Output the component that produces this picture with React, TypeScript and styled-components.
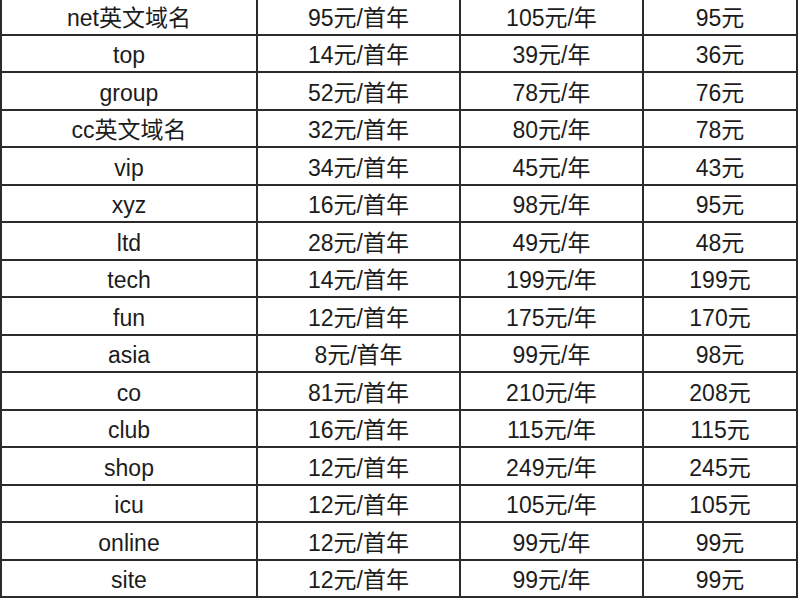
import React from 'react';
import styled, { createGlobalStyle } from 'styled-components';

const ROWS: [string, string, string, string][] = [
  ['net英文域名', '95元/首年', '105元/年', '95元'],
  ['top', '14元/首年', '39元/年', '36元'],
  ['group', '52元/首年', '78元/年', '76元'],
  ['cc英文域名', '32元/首年', '80元/年', '78元'],
  ['vip', '34元/首年', '45元/年', '43元'],
  ['xyz', '16元/首年', '98元/年', '95元'],
  ['ltd', '28元/首年', '49元/年', '48元'],
  ['tech', '14元/首年', '199元/年', '199元'],
  ['fun', '12元/首年', '175元/年', '170元'],
  ['asia', '8元/首年', '99元/年', '98元'],
  ['co', '81元/首年', '210元/年', '208元'],
  ['club', '16元/首年', '115元/年', '115元'],
  ['shop', '12元/首年', '249元/年', '245元'],
  ['icu', '12元/首年', '105元/年', '105元'],
  ['online', '12元/首年', '99元/年', '99元'],
  ['site', '12元/首年', '99元/年', '99元'],
];

const GlobalStyle = createGlobalStyle`
  html, body {
    margin: 0;
    padding: 0;
    background: #ffffff;
  }
  body {
    font-family: "Liberation Sans", "Noto Sans CJK SC", sans-serif;
    color: #1c1c1c;
  }
`;

const Page = styled.div`
  width: 800px;
  height: 600px;
  overflow: hidden;
  background: #ffffff;
`;

const Table = styled.div`
  margin-top: -2px;
  width: 798px;
  border-left: 2px solid #2b2b2b;
  border-right: 2px solid #2b2b2b;
  box-sizing: border-box;
`;

const Row = styled.div`
  display: grid;
  grid-template-columns: 256px 203px 183px 1fr;
  height: 37.53px;
  box-sizing: border-box;
  border-bottom: 2px solid #2b2b2b;
`;

const Cell = styled.div<{ $last?: boolean }>`
  display: flex;
  align-items: center;
  justify-content: center;
  font-size: 23px;
  line-height: 1;
  padding-top: 5px;
  box-sizing: border-box;
  border-right: ${(p) => (p.$last ? 'none' : '2px solid #2b2b2b')};
  white-space: nowrap;
`;

const App = () => {
  return (
    <>
      <GlobalStyle />
      <Page>
        <Table>
          {ROWS.map((row, i) => (
            <Row key={`row-${i}`}>
              {row.map((text, j) => (
                <Cell key={j} $last={j === row.length - 1}>
                  {text}
                </Cell>
              ))}
            </Row>
          ))}
        </Table>
      </Page>
    </>
  );
};

export default App;
